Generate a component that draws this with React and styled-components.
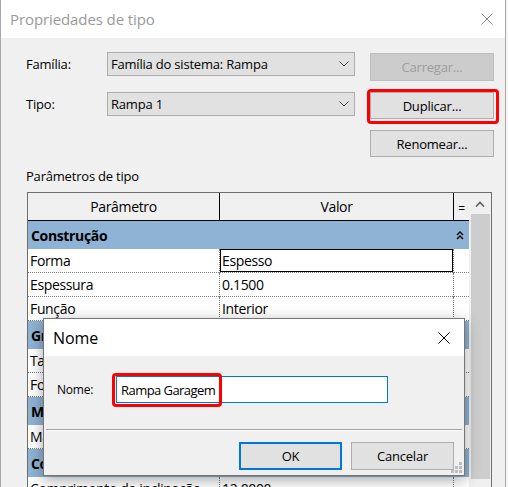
import React from 'react';
import styled, { createGlobalStyle } from 'styled-components';

const GlobalStyle = createGlobalStyle`
  *, *::before, *::after { box-sizing: border-box; }
  html, body { margin: 0; padding: 0; background: #f6f6f6; }
  body {
    font-family: "Open Sans", "Noto Sans", sans-serif;
    font-size: 13px;
    letter-spacing: -0.2px;
    color: #000;
  }
`;

const Window = styled.div`
  position: relative;
  width: 506px;
  height: 487px;
  overflow: hidden;
  background: #f0f0f0;
  border-left: 1px solid #a9a9a9;
  border-right: 1px solid #a9a9a9;
`;

const TitleBar = styled.div`
  height: 38px;
  background: #fff;
  display: flex;
  align-items: center;
  justify-content: space-between;
  padding: 0 12px 0 9px;
`;

const Title = styled.span`
  font-size: ${(p) => p.$size || 15}px;
  letter-spacing: -0.1px;
  color: ${(p) => (p.$active ? '#000' : '#9a9a9a')};
`;

const CloseX = ({ color }) => (
  <svg width="12" height="12" viewBox="0 0 12 12">
    <path d="M0.5 0.5 L11.5 11.5 M11.5 0.5 L0.5 11.5" stroke={color} strokeWidth="1" />
  </svg>
);

const Body = styled.div`
  padding: 14px 0 0 25px;
`;

const TopForm = styled.div`
  display: flex;
  gap: 15px;
`;

const Fields = styled.div`
  display: flex;
  flex-direction: column;
  gap: 16px;
`;

const FieldRow = styled.div`
  display: flex;
  align-items: center;
`;

const Label = styled.span`
  width: 81px;
`;

const Select = styled.div`
  width: 248px;
  height: 24px;
  background: #e1e1e1;
  border: 1px solid #adadad;
  display: flex;
  align-items: center;
  justify-content: space-between;
  padding: 0 5px 0 3px;
`;

const Chevron = () => (
  <svg width="10" height="6" viewBox="0 0 10 6">
    <path d="M0.5 0.5 L5 5 L9.5 0.5" fill="none" stroke="#444" strokeWidth="1" />
  </svg>
);

const Buttons = styled.div`
  display: flex;
  flex-direction: column;
  gap: 11px;
  margin-top: 1px;
`;

const Button = styled.div`
  position: relative;
  width: ${(p) => p.$w || 124}px;
  height: ${(p) => p.$h || 27}px;
  display: flex;
  align-items: center;
  justify-content: center;
  background: ${(p) => (p.$disabled ? '#cccccc' : '#e1e1e1')};
  color: ${(p) => (p.$disabled ? '#9d9d9d' : '#000')};
  border: ${(p) => (p.$default ? '2px solid #0078d7' : p.$disabled ? '1px solid #bfbfbf' : '1px solid #adadad')};
`;

const RedMark = styled.div`
  position: absolute;
  left: ${(p) => p.$l}px;
  top: ${(p) => p.$t}px;
  width: ${(p) => p.$w}px;
  height: ${(p) => p.$h}px;
  border: 3px solid #f00;
  border-radius: 4px;
  pointer-events: none;
`;

const SectionLabel = styled.div`
  margin-top: 10px;
  line-height: 18px;
`;

const TableFrame = styled.div`
  margin: 7px 0 0 1px;
  width: 465px;
  height: 300px;
  display: flex;
  border: 1px solid #6e6e6e;
  border-bottom: none;
`;

const Grid = styled.div`
  width: 441px;
  display: grid;
  grid-template-columns: 191px 234px 16px;
  grid-auto-rows: min-content;
  background: #fff;
  font-size: 14px;
  letter-spacing: -0.35px;
`;

const HeadCell = styled.div`
  height: 28px;
  background: #f0f0f0;
  border-bottom: 1px solid #000;
  border-left: ${(p) => (p.$first ? 'none' : '1px solid #000')};
  display: flex;
  align-items: center;
  justify-content: center;
  font-size: ${(p) => (p.$small ? 12 : 14)}px;
  padding-top: ${(p) => (p.$small ? 4 : 0)}px;
`;

const GroupRow = styled.div`
  grid-column: 1 / -1;
  height: 28px;
  background: #8eb3d4;
  display: flex;
  align-items: center;
  justify-content: space-between;
  padding: 0 5px 0 3px;
  font-weight: 700;
`;

const Cell = styled.div`
  height: 24px;
  display: flex;
  align-items: center;
  padding-left: 2px;
  white-space: nowrap;
  overflow: hidden;
  border-bottom: 1px dotted #7a7a7a;
  border-left: ${(p) => (p.$first ? 'none' : '1px dotted #7a7a7a')};
  box-shadow: ${(p) => (p.$selected ? 'inset 0 0 0 1px #000' : 'none')};
`;

const Collapse = () => (
  <svg width="8" height="9" viewBox="0 0 8 9">
    <path d="M1 4 L4 1 L7 4 M1 8 L4 5 L7 8" fill="none" stroke="#000" strokeWidth="1.4" />
  </svg>
);

const Scrollbar = styled.div`
  width: 22px;
  background: #f0f0f0;
  display: flex;
  flex-direction: column;
  align-items: center;
`;

const ScrollArrow = styled.div`
  height: 21px;
  display: flex;
  align-items: center;
  justify-content: center;
`;

const Thumb = styled.div`
  width: 19px;
  height: 265px;
  background: #cdcdcd;
`;

const Dialog = styled.div`
  position: absolute;
  left: 42px;
  top: 318px;
  width: 422px;
  height: 158px;
  background: #f0f0f0;
  border: 1px solid #767676;
  box-shadow: 0 4px 14px rgba(0, 0, 0, 0.35);
  display: flex;
  flex-direction: column;
`;

const DialogTitle = styled(TitleBar)`
  height: 37px;
  padding: 0 14px 0 9px;
  flex: none;
`;

const DialogBody = styled.div`
  display: flex;
  align-items: center;
  padding: 20px 0 0 13px;
`;

const SmallLabel = styled.span`
  width: 59px;
  font-size: 12px;
`;

const NameInput = styled.div`
  position: relative;
  width: 272px;
  height: 27px;
  background: #fff;
  border: 1px solid #0078d7;
  display: flex;
  align-items: center;
  padding-left: 4px;
  letter-spacing: -0.55px;
`;

const Separator = styled.div`
  margin: 26px 2px 0;
  border-top: 1px solid #a0a0a0;
  border-bottom: 1px solid #fff;
`;

const DialogButtons = styled.div`
  display: flex;
  justify-content: flex-end;
  gap: 9px;
  padding: 11px 10px 0 0;
`;

const Grip = styled.svg`
  position: absolute;
  right: 1px;
  bottom: 1px;
`;

const rows = [
  { group: 'Construção' },
  { name: 'Forma', value: 'Espesso', selected: true },
  { name: 'Espessura', value: '0.1500' },
  { name: 'Função', value: 'Interior' },
  { group: 'Gráficos' },
  { name: 'Tamanho do texto', value: '2.5000 mm' },
  { name: 'Fonte do texto', value: 'Arial' },
  { group: 'Materiais e acabamentos' },
  { name: 'Material da rampa', value: 'Concreto' },
  { group: 'Cotas' },
  { name: 'Comprimento da inclinação', value: '12.0000' },
];

export default function App() {
  return (
    <Window>
      <GlobalStyle />
      <TitleBar>
        <Title>Propriedades de tipo</Title>
        <CloseX color="#8a8a8a" />
      </TitleBar>
      <Body>
        <TopForm>
          <Fields>
            <FieldRow>
              <Label>Família:</Label>
              <Select>
                <span>Família do sistema: Rampa</span>
                <Chevron />
              </Select>
            </FieldRow>
            <FieldRow>
              <Label>Tipo:</Label>
              <Select>
                <span>Rampa 1</span>
                <Chevron />
              </Select>
            </FieldRow>
          </Fields>
          <Buttons>
            <Button $disabled $h={28}>Carregar...</Button>
            <Button>
              Duplicar...
              <RedMark $l={-4} $t={-4} $w={132} $h={35} />
            </Button>
            <Button>Renomear...</Button>
          </Buttons>
        </TopForm>
        <SectionLabel>Parâmetros de tipo</SectionLabel>
        <TableFrame>
          <Grid>
            <HeadCell $first>Parâmetro</HeadCell>
            <HeadCell>Valor</HeadCell>
            <HeadCell $small>=</HeadCell>
            {rows.map((r, i) =>
              r.group ? (
                <GroupRow key={i}>
                  <span>{r.group}</span>
                  {i === 0 && <Collapse />}
                </GroupRow>
              ) : (
                <React.Fragment key={i}>
                  <Cell $first>{r.name}</Cell>
                  <Cell $selected={r.selected}>{r.value}</Cell>
                  <Cell />
                </React.Fragment>
              )
            )}
          </Grid>
          <Scrollbar>
            <ScrollArrow>
              <svg width="10" height="6" viewBox="0 0 10 6">
                <path d="M1 5.5 L5 1.5 L9 5.5" fill="none" stroke="#606060" strokeWidth="1.6" />
              </svg>
            </ScrollArrow>
            <Thumb />
          </Scrollbar>
        </TableFrame>
      </Body>

      <Dialog>
        <DialogTitle>
          <Title $active $size={16}>Nome</Title>
          <CloseX color="#000" />
        </DialogTitle>
        <DialogBody>
          <SmallLabel>Nome:</SmallLabel>
          <NameInput>
            Rampa Garagem
            <RedMark $l={-5} $t={-4} $w={110} $h={34} />
          </NameInput>
        </DialogBody>
        <Separator />
        <DialogButtons>
          <Button $default $w={103} $h={28}>OK</Button>
          <Button $w={103} $h={28}>Cancelar</Button>
        </DialogButtons>
        <Grip width="12" height="12" viewBox="0 0 12 12">
          <g fill="#bdbdbd">
            <rect x="8" y="0" width="3" height="3" />
            <rect x="4" y="4" width="3" height="3" />
            <rect x="8" y="4" width="3" height="3" />
            <rect x="0" y="8" width="3" height="3" />
            <rect x="4" y="8" width="3" height="3" />
            <rect x="8" y="8" width="3" height="3" />
          </g>
        </Grip>
      </Dialog>
    </Window>
  );
}
